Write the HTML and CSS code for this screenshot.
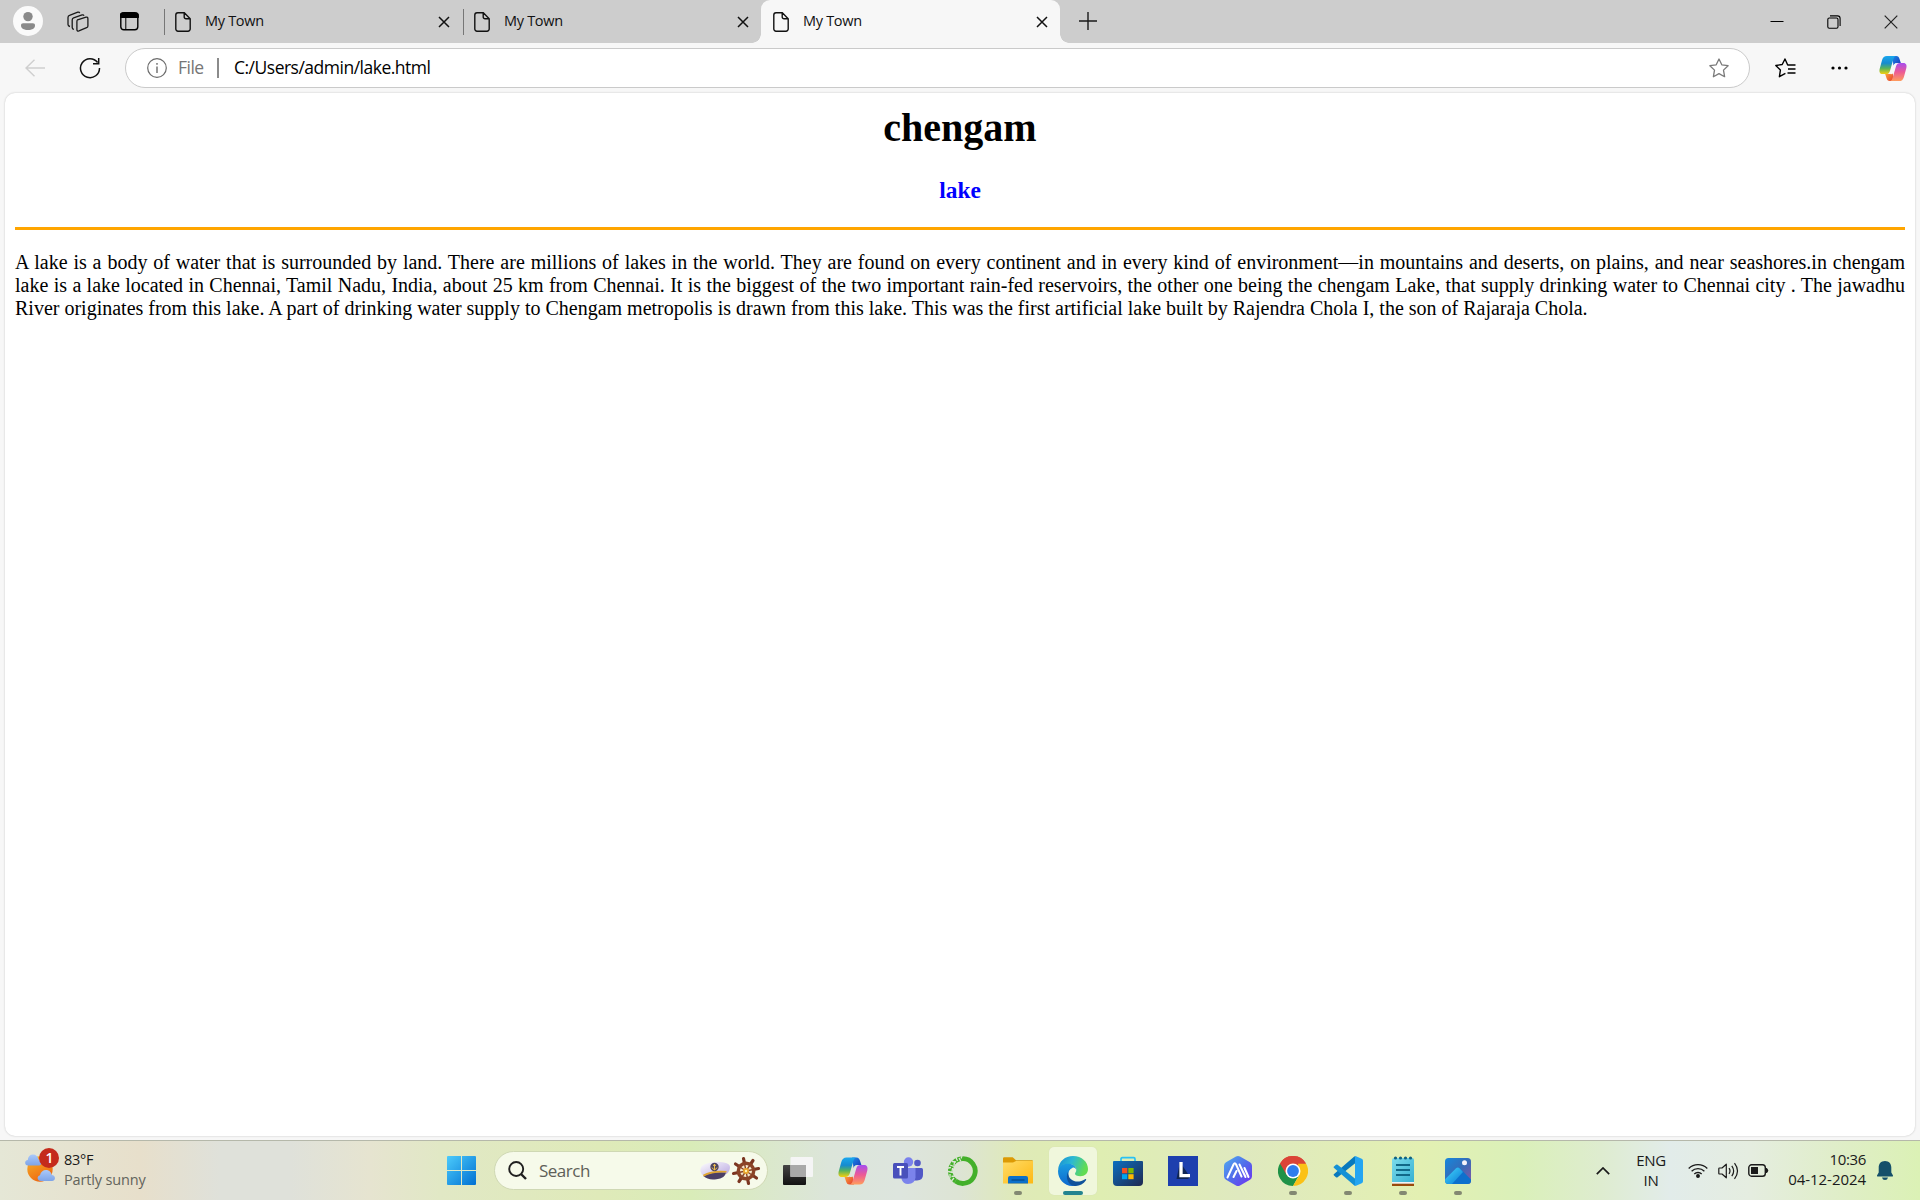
FILE: index.html
```html
<!DOCTYPE html>
<html lang="en">
<head>
<meta charset="utf-8">
<title>My Town</title>
<link rel="stylesheet" href="styles.css">
</head>
<body>
<svg class="defs" width="0" height="0" aria-hidden="true">
  <defs>
    <linearGradient id="cpA" x1="0" y1="0" x2="0" y2="1"><stop offset="0" stop-color="#1aa7ee"/><stop offset=".4" stop-color="#168bd0"/><stop offset=".68" stop-color="#57b35c"/><stop offset="1" stop-color="#f6d00d"/></linearGradient>
    <linearGradient id="cpB" x1="0" y1="0" x2="0" y2="1"><stop offset="0" stop-color="#a64df0"/><stop offset=".5" stop-color="#ec5a96"/><stop offset="1" stop-color="#ff9d5c"/></linearGradient>
    <linearGradient id="cpC" x1="0" y1="0" x2="1" y2="1"><stop offset="0" stop-color="#1b8be8"/><stop offset="1" stop-color="#1a35b8"/></linearGradient>
    <linearGradient id="cpD" x1="0" y1="0" x2="1" y2="1"><stop offset="0" stop-color="#ffb23c"/><stop offset="1" stop-color="#e3382e"/></linearGradient>
    <symbol id="page" viewBox="0 0 16 20"><path d="M3 .8h6.3l5.900 5.900V17a2.200 2.200 0 0 1-2.200 2.200H3A2.200 2.200 0 0 1 .8 17V3A2.200 2.200 0 0 1 3 .8zM9.200.8V5a1.800 1.800 0 0 0 1.800 1.800h4.200" fill="none" stroke="#111" stroke-width="1.400"/></symbol>
    <symbol id="x" viewBox="0 0 12 12"><path d="M1 1l10 10M11 1L1 11" stroke="#111" stroke-width="1.500" fill="none"/></symbol>
    <symbol id="copilot" viewBox="0 0 30 28">
      <path d="M14 .5h4.500c2 0 2.900 1.300 3.500 3.300l1.400 4.200h-3.900c-2 0-3.200 1-3.900 3z" fill="url(#cpC)"/>
      <path d="M16 27.500h-4.500c-2 0-2.900-1.300-3.500-3.300L6.600 20h3.900c2 0 3.200-1 3.900-3z" fill="url(#cpD)"/>
      <path d="M8.500.5H18c-1.500.4-2.200 2-2.800 4l-3.400 11.800C11 19 9.700 20 7.500 20H3.800C.8 20 0 17.500.7 14.500l2.600-9.500C4.200 2 5.700.5 8.500.5z" fill="url(#cpA)"/>
      <path d="M21.500 27.500H12c1.500-.4 2.200-2 2.800-4l3.400-11.800C19 9 20.300 8 22.500 8h3.700c3 0 3.800 2.500 3.100 5.500L26.700 23c-.9 3-2.400 4.500-5.200 4.500z" fill="url(#cpB)"/>
      <path d="M15.700 10.500q.9-2.500 3.600-2.500-1 1-1.700 3.500l-2 7q-.9 2-3.500 1.500-.8-.1.200-1.500z" class="gap"/>
    </symbol>
  </defs>
</svg>

<div class="browser">
  <header class="tabbar">
    <div class="tools">
      <svg class="avatar" width="30" height="30" viewBox="0 0 30 30"><circle cx="15" cy="15" r="15" fill="#fafafa"/><circle cx="15" cy="10.600" r="4.700" fill="#8a8a8a"/><path d="M8 19.500c0-1.400.8-2.200 2.200-2.200h9.600c1.400 0 2.200.8 2.200 2.200 0 3-3 4.500-7 4.500s-7-1.500-7-4.500z" fill="#8a8a8a"/></svg>
      <svg class="spaces" width="22" height="22" viewBox="0 0 22 22" fill="none" stroke="#1a1a1a" stroke-width="1.300" stroke-linejoin="round"><path d="M10.500 8.800l8.500-2.600q1.900-.4 1.900 1.500v7.300q0 1.300-1.300 1.700l-7.700 3.200q-2 .6-2-1.400v-7.800q0-1.500.6-1.900z"/><path d="M6.900 18.500q-1.700-.5-1.700-2V9q0-1.700 1.400-2.200l8.500-2.900q1.500-.4 1.900.9"/><path d="M3 15.500q-2-.4-2-2V6.500Q1 4.800 2.500 4.300L10.800 1.200q1.500-.4 1.900.9"/></svg>
      <svg class="vtabs" width="19" height="19" viewBox="0 0 19 19"><rect x=".8" y="1.300" width="17" height="16.500" rx="3" fill="none" stroke="#000" stroke-width="1.400"/><path d="M0 5.500V3.700Q0 .5 3.200.5h12.200q3.200 0 3.200 3.200v1.800zM5.800 5v13" stroke="#000" stroke-width="1"/></svg>
    </div>
    <div class="tab sep"><svg width="16" height="20"><use href="#page"/></svg><span>My Town</span><svg class="close" width="12" height="12"><use href="#x"/></svg></div>
    <div class="tab sep"><svg width="16" height="20"><use href="#page"/></svg><span>My Town</span><svg class="close" width="12" height="12"><use href="#x"/></svg></div>
    <div class="tab active"><svg width="16" height="20"><use href="#page"/></svg><span>My Town</span><svg class="close" width="12" height="12"><use href="#x"/></svg></div>
    <svg class="plus" width="18" height="18" viewBox="0 0 18 18"><path d="M9 0v18M0 9h18" stroke="#1a1a1a" stroke-width="1.400"/></svg>
    <div class="winctl">
      <svg width="14" height="14" viewBox="0 0 14 14"><path d="M.5 6.500h13" stroke="#000"/></svg>
      <svg width="14" height="14" viewBox="0 0 14 14" fill="none" stroke="#000" stroke-width="1.100"><rect x=".8" y="3" width="10.200" height="10.200" rx="1.500"/><path d="M3 .9h7.500q2.600 0 2.600 2.600V11"/></svg>
      <svg width="14" height="14" viewBox="0 0 14 14"><path d="M.7.7l12.600 12.600M13.300.7L.7 13.300" stroke="#222" stroke-width="1.200"/></svg>
    </div>
  </header>

  <div class="navbar">
    <svg class="back" width="20" height="18" viewBox="0 0 20 18" fill="none" stroke="#cfcfcf" stroke-width="1.400"><path d="M20 9H1M9.500.7L1 9l8.500 8.300"/></svg>
    <svg class="reload" width="22" height="22" viewBox="0 0 22 22" fill="none" stroke="#111" stroke-width="1.500"><path d="M20.500 11A9.500 9.500 0 1 1 18.600 5.500M19.700 1v5.700H14"/></svg>
    <div class="address">
      <svg width="20" height="20" viewBox="0 0 20 20"><circle cx="10" cy="10" r="9.300" fill="none" stroke="#6b6b6b" stroke-width="1.200"/><path d="M10 8.500V15M10 5v1.700" stroke="#6b6b6b" stroke-width="1.400"/></svg>
      <span class="scheme">File</span>
      <i class="bar"></i>
      <span class="url">C:/Users/admin/lake.html</span>
      <svg class="star" width="20" height="20" viewBox="0 0 20 20"><path d="M10 1l2.800 5.800 6.300.9-4.600 4.400 1.100 6.600L10 15.600l-5.600 3.100 1.100-6.600L.9 7.700l6.300-.9z" fill="none" stroke="#7a7a7a" stroke-width="1.300" stroke-linejoin="round"/></svg>
    </div>
    <svg class="favs" width="21" height="20" viewBox="0 0 21 20" fill="none" stroke="#000" stroke-width="1.400" stroke-linejoin="round"><path d="M20.500 7H12.700L10 1 7.200 6.500.8 7.500l4.600 4.600-1 6.600 6-3.300"/><path d="M13 11h7.500M12.500 15h8"/></svg>
    <svg class="dots" width="17" height="4" viewBox="0 0 17 4"><circle cx="2" cy="2" r="1.600"/><circle cx="8.500" cy="2" r="1.600"/><circle cx="15" cy="2" r="1.600"/></svg>
    <svg class="cop" width="28" height="27"><use href="#copilot"/></svg>
  </div>

  <main class="page">
    <h1>chengam</h1>
    <h3>lake</h3>
    <hr>
    <p>A lake is a body of water that is surrounded by land. There are millions of lakes in the world. They are found on every continent and in every kind of environment—in mountains and deserts, on plains, and near seashores.in chengam lake is a lake located in Chennai, Tamil Nadu, India, about 25 km from Chennai. It is the biggest of the two important rain-fed reservoirs, the other one being the chengam Lake, that supply drinking water to Chennai city . The jawadhu River originates from this lake. A part of drinking water supply to Chengam metropolis is drawn from this lake. This was the first artificial lake built by Rajendra Chola I, the son of Rajaraja Chola.</p>
  </main>
</div>

<footer class="taskbar">
  <div class="weather">
    <svg width="36" height="36" viewBox="0 0 36 36">
      <defs><linearGradient id="sun" x1="0" y1="0" x2=".5" y2="1"><stop offset="0" stop-color="#f7b52a"/><stop offset="1" stop-color="#ee6a12"/></linearGradient><linearGradient id="cl" x1="0" y1="0" x2="0" y2="1"><stop offset="0" stop-color="#a9c9fa"/><stop offset="1" stop-color="#7ea4e8"/></linearGradient></defs>
      <circle cx="15" cy="21" r="12.700" fill="url(#sun)"/>
      <path d="M3 17.500c-3.500 0-4-5-.2-5.500C3 8.500 5 6.500 8 6.500s5 2 5.500 5c3 0 4 6 .5 6z" fill="url(#cl)"/>
      <path d="M16 33c-4 0-4.500-5-1-5.700.6-3.300 3-5.300 6-5.300 3.200 0 5.300 2.200 5.700 5 4.300.3 4.300 6 .3 6z" fill="url(#cl)"/>
      <circle cx="24" cy="10" r="10" fill="#c42b1c"/><text class="badge" x="24.400" y="15" text-anchor="middle">1</text>
    </svg>
    <div class="lines"><span class="temp">83°F</span><span class="cond">Partly sunny</span></div>
  </div>

  <div class="apps">
    <div class="app"><svg width="29" height="29" viewBox="0 0 29 29"><defs><linearGradient id="win" x1="0" y1="0" x2="1" y2="1" gradientUnits="objectBoundingBox"><stop offset="0" stop-color="#4ccbfb"/><stop offset="1" stop-color="#0070d2"/></linearGradient></defs><path d="M1 0h13v14H0V1q0-1 1-1zM15 0h13q1 0 1 1v13H15zM0 15h14v14H1q-1 0-1-1zM15 15h14v13q0 1-1 1H15z" fill="url(#win)"/></svg></div>
    <div class="search">
      <svg width="19" height="19" viewBox="0 0 19 19" fill="none" stroke="#202020"><circle cx="8.200" cy="8" r="7" stroke-width="1.900"/><path d="M13 13l5 5" stroke-width="2.400"/></svg>
      <span>Search</span>
      <svg class="art" width="61" height="30" viewBox="0 0 61 30">
        <defs><linearGradient id="hat" x1="0" y1="0" x2="1" y2="1"><stop offset="0" stop-color="#fff"/><stop offset="1" stop-color="#b6a5e0"/></linearGradient></defs>
        <path d="M.5 15.500Q-.5 9 7 7.500 15 4.500 24 6.500q6 1 6 4.500 0 4-3.500 7Q15 15 4 20.500 1.300 18.500.5 15.500z" fill="url(#hat)"/>
        <path d="M3.500 20q9-5 22.500-3.500-1 6-9.500 6.700-8.500 1.300-13-3.200z" fill="#4b3f66"/>
        <path d="M3 18.700q9.500-5.200 23.500-3.700v1.600Q13 15.500 3.700 20.400z" fill="#e0a52e"/>
        <circle cx="14.500" cy="11" r="4.200" fill="#4e4660"/><path d="M14.500 8v6M12 11.500q2.500 4.500 5 0M13 9.300h3" stroke="#efbd50" fill="none"/>
        <g transform="translate(46 15)"><g stroke="#7b3520" stroke-width="3.200" stroke-linecap="round"><path d="M-2.500-12.500L2.500 12.500M12.500-2.500L-12.500 2.500M-10.500-7L10.500 7M7-10.500L-7 10.500"/></g><circle r="7.700" fill="#f5e9cd" stroke="#8b4427" stroke-width="3.400"/><path d="M-1.500-7.500L1.500 7.500M7.500-1.500L-7.500 1.500M-6-4L6 4M4-6L-4 6" stroke="#8b4427" stroke-width="1.400"/><circle r="3" fill="#e9a42b"/><circle r="1.200" fill="#fff0b0"/></g>
      </svg>
    </div>
    <div class="app"><svg width="30" height="28" viewBox="0 0 30 28"><defs><linearGradient id="tvd" x1="0" y1="0" x2="0" y2="1"><stop offset="0" stop-color="#454545"/><stop offset="1" stop-color="#111"/></linearGradient></defs><rect x="0" y="8" width="23" height="20" rx="1" fill="url(#tvd)"/><rect x="7.500" y="0" width="22.500" height="20" rx="1" fill="#f5f5f5"/><path d="M7.500 8H23v12H7.500z" fill="#a9a9a9"/></svg></div>
    <div class="app"><svg class="on-bar" width="30" height="28"><use href="#copilot"/></svg></div>
    <div class="app"><svg width="30" height="27" viewBox="0 0 30 27"><circle cx="15.500" cy="5" r="4.700" fill="#7a81ec"/><circle cx="24.500" cy="6" r="3.300" fill="#5158c6"/><path d="M20 11h8.500q1.500 0 1.500 1.500V18q0 5-6 5.500h-4z" fill="#5158c6"/><path d="M9 11h13.500v9.500q-.5 6-7.500 6.500-5 0-6.500-5z" fill="#7b83eb"/><rect x="0" y="6" width="15" height="15.500" rx="1.500" fill="#4950bb"/><path d="M4 10h7M7.500 10v8.500" stroke="#fff" stroke-width="1.900"/></svg></div>
    <div class="app"><svg width="30" height="30" viewBox="0 0 30 30" fill="none" stroke="#43b02a"><path d="M15 2.600A12.400 12.400 0 1 1 7.500 25" stroke-width="4.800"/><path d="M15 2.600A12.400 12.400 0 0 0 7.500 25" stroke-width="4.800"/><path d="M14 0l-1 2.500M11 2l2 3.500M8 1.500L9.500 5M4 5.500L8 6M6.500 6L6 9.500M2 9l4 1.500M0 12l3-.5M4.500 12L4 16M0 15.500l5 1M2 18v4M3.500 20.500L7 20M6 22l-2.500 3" stroke="#dde5d6" stroke-width="1.300"/></svg></div>
    <div class="app open"><svg width="30" height="27" viewBox="0 0 30 27"><defs><linearGradient id="fold" x1="0" y1="0" x2="1" y2="1"><stop offset="0" stop-color="#ffdc67"/><stop offset="1" stop-color="#fdb813"/></linearGradient></defs><path d="M0 6V1.500Q0 .3 1.200.3h8.500L13 3.200h16q1 0 1 1V8H0z" fill="#dc9a05"/><path d="M0 5.500h10l3-1.500h17v22.500H0z" fill="url(#fold)"/><path d="M5 26.500V21q0-2 2-2h16q2 0 2 2v5.500z" fill="#0b70ca"/><path d="M8.500 23h13" stroke="#064b8c" stroke-width="1.300"/></svg></div>
    <div class="app current"><svg width="30" height="30" viewBox="0 0 30 30"><defs><linearGradient id="eg" x1="0" y1="0" x2="1" y2=".3"><stop offset="0" stop-color="#178bd6"/><stop offset=".5" stop-color="#2cb9d2"/><stop offset="1" stop-color="#62dc52"/></linearGradient><linearGradient id="eb" x1="0" y1="0" x2="0" y2="1"><stop offset="0" stop-color="#1a9de0"/><stop offset="1" stop-color="#0d68ce"/></linearGradient></defs><path d="M0 14C1 5 7 0 15 0c9 0 15 6 15 13 0 4.500-3.200 7.200-7.500 7.200-3.500 0-5.500-1.300-5.500-2.500 0-1 1.300-1.500 1.300-4C18.300 10.500 15 8 11 8 6 8 2 10 0 14z" fill="url(#eg)"/><path d="M0 15C.5 9.500 5.500 7.700 10.500 7.700c4.500 0 7.800 2.700 7.800 6-1-2-2.700-2.500-4-1.800-3 1-4.500 4.300-3.700 8.100.8 4.500 4 8.500 7.400 9.500C8 32 0 24 0 15z" fill="url(#eb)"/><path d="M12.500 12.500c-3.500 2.500-3 8 .5 10.700 4 3.300 9.500 2.800 14 0 1-.5 1.500.2 1 1-3 4.500-8.500 6.500-12.500 5.600C9 28 6 19 12.500 12.500z" fill="#10529b"/></svg></div>
    <div class="app"><svg width="30" height="30" viewBox="0 0 30 30"><defs><linearGradient id="st" x1="0" y1="0" x2="1" y2="1"><stop offset="0" stop-color="#0c6fc0"/><stop offset="1" stop-color="#20294f"/></linearGradient></defs><path d="M8 7V3q0-1.300 1.300-1.300h11.400Q22 1.700 22 3v4" fill="none" stroke="#29c1f4" stroke-width="1.700"/><path d="M0 6q0-1 1-1h28q1 0 1 1v20q0 4-4 4H4q-4 0-4-4z" fill="url(#st)"/><path d="M9 12h5.300v5.300H9z" fill="#f25022"/><path d="M15.300 12h5.300v5.300h-5.300z" fill="#7fba00"/><path d="M9 18.200h5.300v5H9z" fill="#00a4ef"/><path d="M15.300 18.200h5.300v5h-5.300z" fill="#ffb900"/></svg></div>
    <div class="app"><svg width="30" height="30" viewBox="0 0 30 30"><path d="M0 0h30v30H0z" fill="#1d3fae"/><path d="M12 6L8.500 23H20l2-2z" fill="#102553"/><path d="M13 6v13.700h9" fill="none" stroke="#fff" stroke-width="3.300"/></svg></div>
    <div class="app"><svg width="28" height="30" viewBox="0 0 28 30"><defs><linearGradient id="hx" x1="0" y1="0" x2="1" y2="1"><stop offset="0" stop-color="#4faef0"/><stop offset=".5" stop-color="#526dea"/><stop offset="1" stop-color="#702df2"/></linearGradient></defs><path d="M12 .6q2-1 4 0l10 5.700q2 1.200 2 3.400v10.600q0 2.200-2 3.400l-10 5.700q-2 1.200-4 0L2 23.700q-2-1.200-2-3.400V9.700Q0 7.500 2 6.300z" fill="url(#hx)"/><path d="M3.500 21.500L9.500 8.500q1.300-2.500 2.600 0L17.500 20.500M9.500 21l3-6M15.500 8.500l6 12.500M20.500 12l4 9" fill="none" stroke="#fff" stroke-width="2" stroke-linecap="round"/></svg></div>
    <div class="app open"><svg width="30" height="30" viewBox="0 0 30 30"><path d="M2 7.500A15 15 0 0 1 28 7.500L15 15z" fill="#db4437"/><path d="M2 7.500A15 15 0 0 0 15 30L21.500 18.500 15 15z" fill="#1f9247"/><path d="M28 7.500A15 15 0 0 1 15 30L21.500 18.700 20 7.500z" fill="#fbc116"/><path d="M2 7.500L8.500 18.700 15 7.500H28A15 15 0 0 0 2 7.500z" fill="#db4437"/><circle cx="15" cy="15" r="7.500" fill="#fff"/><circle cx="15" cy="15" r="5.900" fill="#2f7ced"/></svg></div>
    <div class="app open"><svg width="30" height="30" viewBox="0 0 30 30"><path d="M1 19.500l2 1.800q.8.500 1.600 0L22.500 7V.2q-1 .1-1.800.8L.8 18.300q-.6.600.2 1.200z" fill="#0879bd"/><path d="M1 10.500l2-1.800q.8-.5 1.600 0L22.500 23v6.800q-1-.1-1.800-.8L.8 11.700q-.6-.6.2-1.200z" fill="#1591d5"/><path d="M21 .8q.8-.8 2-.5l5.700 2.500Q30 3.400 30 4.800v20.400q0 1.400-1.300 2l-5.700 2.500q-1.200.3-2-.5 1 .5 1-1V2q0-1.500-1-1.200z" fill="#24a5f2"/></svg></div>
    <div class="app open"><svg width="22" height="30" viewBox="0 0 22 30"><defs><linearGradient id="np" x1="0" y1="0" x2="1" y2="1"><stop offset="0" stop-color="#7ddcec"/><stop offset="1" stop-color="#36b0d2"/></linearGradient></defs><path d="M0 24h22v6H0z" fill="#9a4a0c"/><path d="M0 24h22v3.700H0z" fill="#f3f3f3"/><path d="M0 4q0-2 2-2h18q2 0 2 2v22H0z" fill="url(#np)"/><g fill="#126280"><circle cx="3.500" cy="2" r="1.600"/><circle cx="8.500" cy="2" r="1.600"/><circle cx="13.500" cy="2" r="1.600"/><circle cx="18.500" cy="2" r="1.600"/></g><path d="M4 9h14M4 14h14M4 19h14" stroke="#116888" stroke-width="1.900"/></svg></div>
    <div class="app open"><svg width="26" height="26" viewBox="0 0 26 26"><defs><linearGradient id="ph" x1="0" y1="0" x2="1" y2="1"><stop offset="0" stop-color="#1687dc"/><stop offset=".5" stop-color="#356bb8"/><stop offset="1" stop-color="#8a55a5"/></linearGradient><linearGradient id="mt" x1="0" y1="0" x2="1" y2="1"><stop offset="0" stop-color="#45d7fb"/><stop offset="1" stop-color="#0879d5"/></linearGradient></defs><rect width="26" height="26" rx="3.500" fill="url(#ph)"/><path d="M.5 22L11 10.500q2-2 4 0L26 21.500V22.500q0 3.500-3.500 3.500h-19Q1 26 .5 22z" fill="#0d70cd"/><path d="M.3 21L10.800 10.500q2-2 4 0L18 14 7 26H3.500Q0 26 0 22.500z" fill="url(#mt)"/><circle cx="19.500" cy="4.700" r="2.500" fill="#f5f3fa"/></svg></div>
  </div>

  <div class="tray">
    <svg class="chev" width="14" height="8" viewBox="0 0 14 8"><path d="M.8 7.200L7 1l6.200 6.200" fill="none" stroke="#1a1a1a" stroke-width="1.700"/></svg>
    <div class="lang"><span>ENG</span><span>IN</span></div>
    <svg class="wifi" width="20" height="15" viewBox="0 0 20 15" fill="none" stroke="#1a1a1a" stroke-width="1.300"><path d="M.7 5.500a13 13 0 0 1 18.600 0M3.600 8.300a9 9 0 0 1 12.800 0M6.300 11a5.300 5.300 0 0 1 7.400 0"/><circle cx="10" cy="13" r="1.300" fill="#1a1a1a"/></svg>
    <svg class="vol" width="21" height="18" viewBox="0 0 21 18" fill="none" stroke="#1a1a1a" stroke-width="1.200"><path d="M.8 6.700q0-.7.700-.7H4L8.300 2.200V15.800L4 12H1.500q-.7 0-.7-.7z" stroke-linejoin="round"/><path d="M11 6.200q2 2.800 0 5.600M13.800 3.800q3.700 5.200 0 10.400M16.500 1.200q6 7.800 0 15.600"/></svg>
    <svg class="bat" width="21" height="13" viewBox="0 0 21 13"><rect x=".8" y=".8" width="16.500" height="11.400" rx="2.800" fill="none" stroke="#1a1a1a" stroke-width="1.400"/><path d="M3 3h7v7H3z" fill="#1a1a1a"/><path d="M17.500 4h1.200q1.500 1 1.500 2.500t-1.500 2.500h-1.200z" fill="#1a1a1a"/></svg>
    <div class="clock"><span>10:36</span><span class="date">04-12-2024</span></div>
    <svg class="bell" width="16" height="19" viewBox="0 0 16 19"><path d="M8 0c4 0 6.300 2.800 6.300 6.500v5L16 14.500q.2 1-1 1H1q-1.200 0-1-1l1.700-3v-5C1.700 2.800 4 0 8 0zM5 16.500h6Q10.500 19 8 19t-3-2.500z" fill="#15506a"/></svg>
  </div>
</footer>
</body>
</html>
```
FILE: styles.css
```css
* { box-sizing: border-box; }
body {
  margin: 0;
  width: 1920px;
  height: 1200px;
  display: flex;
  flex-direction: column;
  overflow: hidden;
  background: #f7f7f7;
  font-family: "Open Sans", "Noto Sans", sans-serif;
  color: #1a1a1a;
}
svg { display: block; flex: none; }
.defs { position: absolute; }
.gap { fill: var(--behind, #f7f7f7); }
.on-bar { --behind: #dde6e0; }
.browser { height: 1140px; display: flex; flex-direction: column; flex: none; }

/* tab strip */
.tabbar { height: 43px; display: flex; align-items: center; background: #cdcdcd; flex: none; }
.tools { width: 163px; display: flex; align-items: center; padding-left: 13px; flex: none; }
.avatar { margin-top: -1px; }
.spaces { margin-left: 24px; }
.vtabs { margin-left: 31px; }
.tab { position: relative; width: 299px; height: 43px; display: flex; align-items: center; padding: 0 12px; flex: none; font-size: 14.5px; letter-spacing: -.3px; color: #111; }
.tab span { margin-left: 14px; margin-top: -2px; }
.tab .close { margin-left: auto; margin-top: 1px; }
.tab.sep::before { content: ""; position: absolute; left: 1px; top: 9px; width: 1px; height: 26px; background: #767676; }
.tab.active { background: #f7f7f7; border-radius: 9px 9px 0 0; }
.tab.active::before, .tab.active::after { content: ""; position: absolute; bottom: 0; width: 9px; height: 9px; }
.tab.active::before { left: -9px; background: radial-gradient(circle at 0 0, transparent 8.5px, #f7f7f7 9px); }
.tab.active::after { right: -9px; background: radial-gradient(circle at 100% 0, transparent 8.5px, #f7f7f7 9px); }
.plus { margin-left: 19px; margin-top: -2px; }
.winctl { margin-left: auto; display: flex; gap: 43px; padding-right: 22px; }

/* address row */
.navbar { height: 50px; display: flex; align-items: center; padding: 0 13px 0 25px; flex: none; }
.reload { margin-left: 34px; }
.address { margin: 0 0 0 24px; width: 1625px; height: 40px; border: 1px solid #cacaca; border-radius: 20px; background: #fff; display: flex; align-items: center; padding: 0 20px 0 21px; font-size: 17.5px; letter-spacing: -.5px; }
.scheme { margin-left: 11px; width: 27px; color: #767676; margin-top: -2px; }
.bar { width: 2px; height: 20px; margin-left: 12px; background: #8b8b8b; }
.url { margin-left: 15px; margin-top: -2px; color: #000; }
.star { margin-left: auto; }
.favs { margin-left: 25px; }
.dots { margin-left: 35px; }
.cop { margin-left: auto; }

/* document */
.page { margin: 0 5px; height: 1043px; border-radius: 10px; background: #fff; box-shadow: 0 0 2px #bdbdbd; padding: 8px 10px; font-family: "Liberation Serif", "Times New Roman", serif; font-size: 20px; color: #000; }
.page h1 { margin: 4px 0 0; font-size: 40px; line-height: 46px; text-align: center; }
.page h3 { margin: 26px 0 0; font-size: 23.4px; line-height: 27px; text-align: center; color: #0000ff; }
.page hr { margin: 23px 0 0; height: 3px; border: 0; background: orange; }
.page p { margin: 21px 0 0; line-height: 23px; text-align: justify; }

/* taskbar */
.taskbar {
  height: 60px;
  display: flex;
  flex: none;
  border-top: 1px solid #b5b8aa;
  background: linear-gradient(90deg, #e5e7d6 0, #e7dfcb 140px, #dfe1da 220px, #dfe1da 290px, #e6e4d0 370px, #e1e8c5 440px, #dfeab9 600px, #d9ecb8 690px, #dce5da 830px, #dde5de 900px, #dde4d4 960px, #dfeab7 1020px, #dfeeb2 1100px, #dfe9bf 1240px, #e3f0b2 1420px, #daf0b9 1520px, #deeccf 1600px, #e2ecea 1670px, #e5ede0 1750px, #dfeec5 1850px, #dbf1b5 1920px);
}
.weather { width: 437px; padding: 7px 0 0 25px; display: flex; flex: none; }
.lines { margin: 2px 0 0 3px; display: flex; flex-direction: column; font-size: 14.5px; line-height: 20px; }
.temp { letter-spacing: -.3px; }
.cond { color: #63645c; letter-spacing: -.15px; }
.badge { font-size: 14px; font-weight: 600; fill: #fff; }
.apps { display: flex; align-items: center; gap: 7px; width: 1052px; flex: none; }
.app { position: relative; width: 48px; height: 48px; display: flex; align-items: center; justify-content: center; border-radius: 5px; flex: none; }
.search { width: 274px; height: 39px; margin: 0 -1px 0 2px; border: 1px solid #cfd8b4; border-radius: 20px; background: #f6faea; display: flex; align-items: center; padding: 0 6px 0 13px; flex: none; font-size: 17px; letter-spacing: -.5px; color: #5e6058; }
.search span { margin-left: 12px; }
.search .art { margin-left: auto; }
.open::after, .current::after { content: ""; position: absolute; left: 20px; bottom: 0; width: 8px; height: 4px; border-radius: 2px; background: #838872; }
.current { background: #f0f7dc; box-shadow: 0 0 1px #cdd6b0; }
.current::after { left: 14px; width: 20px; background: #23848f; }
.tray { display: flex; align-items: center; flex: 1; font-size: 15px; line-height: 20px; letter-spacing: -.35px; }
.chev { margin-left: 107px; }
.lang { width: 40px; margin-left: 21px; margin-top: -2px; display: flex; flex-direction: column; align-items: center; }
.wifi { margin-left: 17px; margin-top: -1px; }
.vol { margin-left: 10px; }
.bat { margin-left: 9px; }
.clock { width: 82px; margin-left: 15px; display: flex; flex-direction: column; align-items: flex-end; margin-top: -4px; }
.date { letter-spacing: -.05px; }
.bell { margin-left: 11px; }
```
